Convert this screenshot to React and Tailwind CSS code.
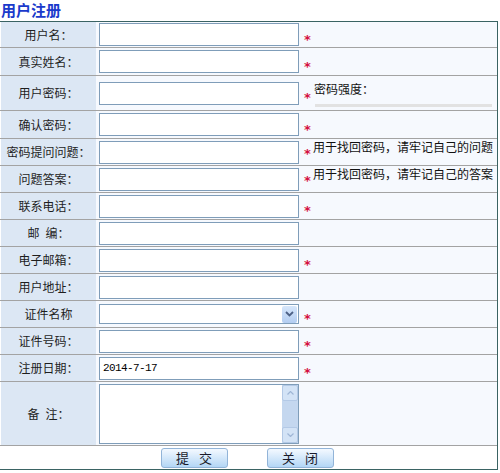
import React from "react";

const font = { fontFamily: '"Noto Sans CJK SC", "Liberation Sans", sans-serif' };

const Star = ({ hint }) => (
  <span
    className={`w-[10px] pl-[5px] text-[13px] font-bold leading-[12px] text-[#d40f3f] ${hint ? "mt-[3px]" : "mt-[10px]"}`}
    style={{ fontFamily: '"DejaVu Sans", sans-serif' }}
  >
    *
  </span>
);

const Row = ({ label, h, children }) => (
  <div className={`flex ${h} border-b border-[#a3a3a3]`}>
    <div className="ml-[1px] w-[95px] shrink-0 bg-[#dce7f4] flex items-center justify-center text-[12px] text-[#1e1e1e]">
      {label}
    </div>
    <div className="flex-1 bg-[#f6f9fe] flex items-center pl-[3px]">{children}</div>
  </div>
);

const Field = ({ value }) => (
  <div className="w-[200px] h-[23px] border border-[#7f9db9] bg-white flex items-center pl-[3px]">
    {value && (
      <span className="text-[11px] tracking-[-0.6px] text-black" style={{ fontFamily: '"Liberation Mono", monospace' }}>
        {value}
      </span>
    )}
  </div>
);

const Hint = ({ text }) => (
  <span className="ml-[4px] mb-[10px] text-[12px] leading-[12px] text-[#111] whitespace-nowrap">{text}</span>
);

const Gap = () => <span className="inline-block w-[6px]" />;

export default function App() {
  return (
    <div className="w-[500px] h-[473px] bg-white" style={font}>
      <div className="h-[21px] pl-[1px] text-[15px] font-bold leading-[20px] text-[#1a3acb]">用户注册</div>
      <div className="w-[498px] border-t border-r border-b border-[#3a6363]">
        <Row label="用户名：" h="h-[26px]">
          <Field />
          <Star />
        </Row>
        <Row label="真实姓名：" h="h-[28px]">
          <Field />
          <Star />
        </Row>
        <Row label="用户密码：" h="h-[35px]">
          <Field />
          <Star />
          <div className="self-start ml-[5px] mt-[6px] flex flex-col">
            <span className="text-[12px] leading-[14px] text-[#111]">密码强度：</span>
            <div className="mt-[8px] ml-[1px] w-[177px] h-[3px] bg-[#e2e2e2]" />
          </div>
        </Row>
        <Row label="确认密码：" h="h-[28px]">
          <Field />
          <Star />
        </Row>
        <Row label="密码提问问题：" h="h-[27px]">
          <Field />
          <Star hint />
          <Hint text="用于找回密码，请牢记自己的问题" />
        </Row>
        <Row label="问题答案：" h="h-[27px]">
          <Field />
          <Star hint />
          <Hint text="用于找回密码，请牢记自己的答案" />
        </Row>
        <Row label="联系电话：" h="h-[27px]">
          <Field />
          <Star />
        </Row>
        <Row label={<>邮<Gap />编：</>} h="h-[27px]">
          <Field />
        </Row>
        <Row label="电子邮箱：" h="h-[27px]">
          <Field />
          <Star />
        </Row>
        <Row label="用户地址：" h="h-[27px]">
          <Field />
        </Row>
        <Row label="证件名称" h="h-[27px]">
          <div className="w-[200px] h-[20px] border border-[#7f9db9] bg-white flex justify-end items-center pr-[1px]">
            <div className="w-[15px] h-[17px] rounded-[2px] bg-gradient-to-b from-[#d6e6fb] to-[#b3cdf1] flex items-center justify-center">
              <svg width="9" height="6" viewBox="0 0 9 6">
                <path d="M1 1 L4.5 4.5 L8 1" fill="none" stroke="#4d6186" strokeWidth="1.8" />
              </svg>
            </div>
          </div>
          <Star />
        </Row>
        <Row label="证件号码：" h="h-[27px]">
          <Field />
          <Star />
        </Row>
        <Row label="注册日期：" h="h-[27px]">
          <Field value="2014-7-17" />
          <Star />
        </Row>
        <Row label={<>备<Gap />注：</>} h="h-[64px]">
          <div className="w-[200px] h-[60px] border border-[#7f9db9] bg-white flex justify-end">
            <div className="w-[16px] flex flex-col bg-[#c4d7ef]">
              <div className="h-[16px] border border-[#b3c9e6] bg-[#d3e3f6] rounded-[2px] flex items-center justify-center">
                <svg width="7" height="4" viewBox="0 0 7 4">
                  <path d="M0.5 3.5 L3.5 0.5 L6.5 3.5" fill="none" stroke="#9fb6d6" strokeWidth="1.2" />
                </svg>
              </div>
              <div className="flex-1" />
              <div className="h-[16px] border border-[#b3c9e6] bg-[#d3e3f6] rounded-[2px] flex items-center justify-center">
                <svg width="7" height="4" viewBox="0 0 7 4">
                  <path d="M0.5 0.5 L3.5 3.5 L6.5 0.5" fill="none" stroke="#9fb6d6" strokeWidth="1.2" />
                </svg>
              </div>
            </div>
          </div>
        </Row>
        <div className="h-[23px] flex items-center justify-center gap-[39px] pr-[3px]">
          {["提", "关"].map((a, i) => (
            <button
              key={a}
              className="w-[67px] h-[20px] border border-[#92b4d8] rounded-[3px] bg-gradient-to-b from-[#f4f9ff] to-[#b3d6f5] flex items-center justify-center text-[13px] leading-none text-[#1a1a2a]"
            >
              <span>{a}</span>
              <span className="ml-[10px]">{i === 0 ? "交" : "闭"}</span>
            </button>
          ))}
        </div>
      </div>
    </div>
  );
}
